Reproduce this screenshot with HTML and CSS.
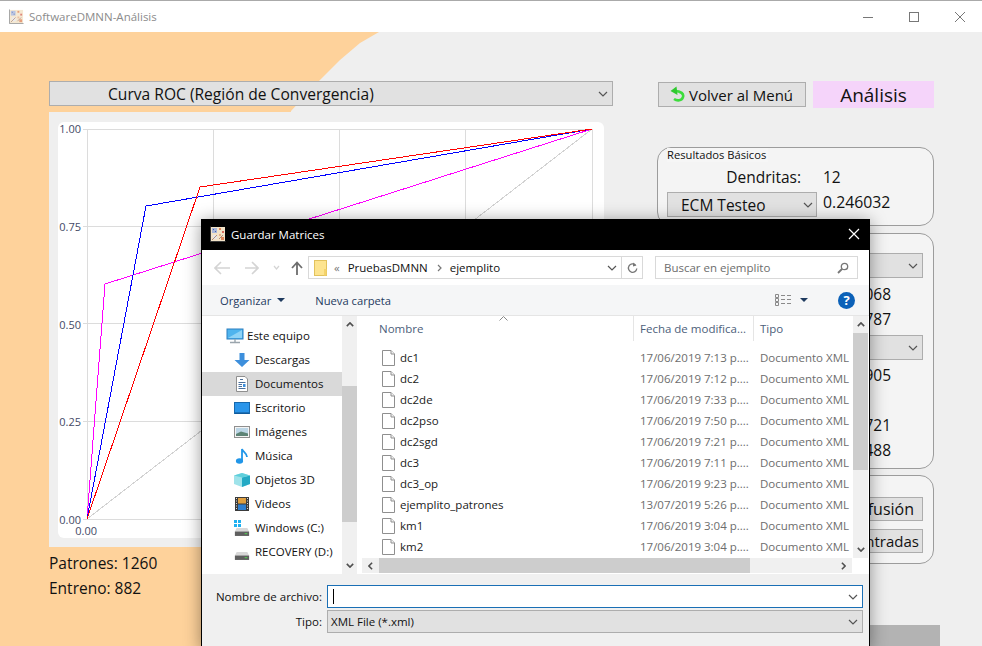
FILE: index.html
```html
<!DOCTYPE html>
<html lang="es">
<head>
    <meta charset="UTF-8">
    <meta name="viewport" content="width=device-width, initial-scale=1.0">
    <title>SoftwareDMNN-Análisis</title>
    <link rel="stylesheet" href="styles.css">
</head>
<body>

    <!-- shared icons -->
    <svg class="defs" width="0" height="0">
        <symbol id="appicon" viewBox="0 0 16 16">
            <rect x="1" y="1" width="14" height="14" fill="#f3e3c8"/>
            <rect x="2" y="2" width="5" height="5" fill="#a9b8dc"/>
            <rect x="3" y="3" width="1" height="1" fill="#4b62a8"/>
            <rect x="5" y="5" width="1" height="1" fill="#4b62a8"/>
            <rect x="9" y="2" width="2" height="2" fill="#e0875a"/>
            <rect x="12" y="5" width="2" height="2" fill="#d9695a"/>
            <rect x="9" y="8" width="2" height="2" fill="#e8b08a"/>
            <rect x="3" y="9" width="4" height="4" fill="#e6e6ea"/>
            <rect x="11" y="11" width="3" height="3" fill="#e0875a"/>
            <path d="M2 14 L7 9 M9 13 L13 9" stroke="#b08c78" stroke-width="1"/>
            <path d="M0.5 0.5 V15.5 H15.5" stroke="#555" stroke-width="1" fill="none" opacity=".7"/>
        </symbol>
        <symbol id="chev" viewBox="0 0 10 6">
            <path d="M1 1 L5 5 L9 1" fill="none" stroke="#555" stroke-width="1.2"/>
        </symbol>
        <symbol id="file" viewBox="0 0 13 16">
            <path d="M.5 .5 H9 L12.5 4 V15.5 H.5 Z" fill="#fff" stroke="#8f8f8f"/>
            <path d="M9 .5 V4 H12.5" fill="#f2f2f2" stroke="#8f8f8f"/>
        </symbol>
        <symbol id="drive" viewBox="0 0 18 10">
            <path d="M3 1 H15 L17 5 H1 Z" fill="#d8d8d8"/>
            <rect x="1" y="5" width="16" height="5" fill="#5f5f5f"/>
            <rect x="12" y="7" width="3" height="1" fill="#4fe04f"/>
        </symbol>
        <symbol id="arrow-up" viewBox="0 0 10 6">
            <path d="M1 5 L5 1 L9 5" fill="none" stroke="#505050" stroke-width="2"/>
        </symbol>
        <symbol id="arrow-down" viewBox="0 0 10 6">
            <path d="M1 1 L5 5 L9 1" fill="none" stroke="#505050" stroke-width="2"/>
        </symbol>
        <symbol id="arrow-left" viewBox="0 0 6 10">
            <path d="M5 1 L1 5 L5 9" fill="none" stroke="#505050" stroke-width="2"/>
        </symbol>
        <symbol id="arrow-right" viewBox="0 0 6 10">
            <path d="M1 1 L5 5 L1 9" fill="none" stroke="#505050" stroke-width="2"/>
        </symbol>
    </svg>

    <div class="window">
        <div class="titlebar">
            <svg class="title-icon" width="15" height="15"><use href="#appicon"/></svg>
            <span class="title-text">SoftwareDMNN-Análisis</span>
            <div class="win-controls">
                <svg width="12" height="12" viewBox="0 0 12 12"><path d="M1 6.5 H11" stroke="#777"/></svg>
                <svg width="12" height="12" viewBox="0 0 12 12"><rect x="1.5" y="1.5" width="9" height="9" fill="none" stroke="#777"/></svg>
                <svg width="12" height="12" viewBox="0 0 12 12"><path d="M1 1 L11 11 M11 1 L1 11" stroke="#777"/></svg>
            </div>
        </div>

        <div class="app">
            <div class="peach"></div>

            <div class="left-col">
                <div class="combo combo-main">
                    <span>Curva ROC (Región de Convergencia)</span>
                    <svg class="chev" width="10" height="6"><use href="#chev"/></svg>
                </div>
                <div class="chart-panel">
                    <div class="chart-card">
                        <svg class="chart" width="546" height="416" viewBox="58 122 546 416">
                            <g class="grid">
                                <path d="M83 129.5 H592 M83 226.5 H592 M83 323.5 H592 M83 421.5 H592 M83 519.5 H592"/>
                                <path d="M87.5 129 V519 M213.5 129 V519 M339.5 129 V519 M465.5 129 V519 M592.5 129 V519"/>
                            </g>
                            <g class="curves">
                                <polyline points="87,519 592,129" stroke="#d2d2d2"/>
                                <polyline points="87,519 105,284 592,129" stroke="#ff00ff"/>
                                <polyline points="87,519 146,206 592,129" stroke="#0000ff"/>
                                <polyline points="87,519 200,187 592,129" stroke="#ff0000"/>
                            </g>
                            <g class="ticks">
                                <text x="81" y="133">1.00</text>
                                <text x="81" y="231">0.75</text>
                                <text x="81" y="329">0.50</text>
                                <text x="81" y="426">0.25</text>
                                <text x="81" y="524">0.00</text>
                                <text x="97" y="535">0.00</text>
                            </g>
                        </svg>
                    </div>
                </div>
                <div class="stats">
                    <p>Patrones: 1260</p>
                    <p>Entreno: 882</p>
                </div>
            </div>

            <div class="right-col">
                <div class="top-row">
                    <div class="btn btn-back">
                        <svg width="15" height="17" viewBox="0 0 15 17">
                            <path d="M5 5 C11 5 14 8 13 11 C12 15 7 15 4 13" fill="none" stroke="#3cdc3c" stroke-width="2.6"/>
                            <path d="M6.5 0.5 L0.5 5 L7.5 9 Z" fill="#2fc92f"/>
                        </svg>
                        <span>Volver al Menú</span>
                    </div>
                    <div class="section-name">Análisis</div>
                </div>

                <div class="group group-basic">
                    <span class="group-title">Resultados Básicos</span>
                    <div class="basic-row">
                        <span class="basic-label">Dendritas:</span>
                        <span>12</span>
                    </div>
                    <div class="basic-row basic-row-combo">
                        <div class="combo combo-ecm">
                            <span>ECM Testeo</span>
                            <svg class="chev" width="10" height="6"><use href="#chev"/></svg>
                        </div>
                        <span class="basic-value">0.246032</span>
                    </div>
                </div>

                <!-- the dialog covers the left part of this box, only the tails show -->
                <div class="group group-metrics">
                    <div class="combo combo-wide"><svg class="chev" width="10" height="6"><use href="#chev"/></svg></div>
                    <div class="value-row">068</div>
                    <div class="value-row">787</div>
                    <div class="combo combo-wide combo-second"><svg class="chev" width="10" height="6"><use href="#chev"/></svg></div>
                    <div class="value-row">905</div>
                    <div class="value-row"></div>
                    <div class="value-row">721</div>
                    <div class="value-row">488</div>
                </div>

                <div class="group group-actions">
                    <div class="btn btn-action">fusión</div>
                    <div class="btn btn-action btn-tight">ntradas</div>
                </div>

                <div class="progress"></div>
            </div>
        </div>
    </div>

    <!-- Guardar Matrices dialog -->
    <div class="dialog">
        <div class="dialog-title">
            <svg width="16" height="16"><use href="#appicon"/></svg>
            <span>Guardar Matrices</span>
            <svg class="dialog-close" width="12" height="12" viewBox="0 0 12 12"><path d="M1 1 L11 11 M11 1 L1 11" stroke="#fff" stroke-width="1.2"/></svg>
        </div>

        <div class="nav-bar">
            <svg class="nav-back" width="16" height="14" viewBox="0 0 16 14"><path d="M7 1 L1 7 L7 13 M1 7 H16" fill="none" stroke="#d4d4d4" stroke-width="1.6"/></svg>
            <svg class="nav-fwd" width="14" height="14" viewBox="0 0 14 14"><path d="M7 1 L13 7 L7 13 M13 7 H0" fill="none" stroke="#d4d4d4" stroke-width="1.6"/></svg>
            <svg class="nav-drop" width="7" height="5" viewBox="0 0 7 5"><path d="M1 1 L3.5 4 L6 1" fill="none" stroke="#d4d4d4" stroke-width="1.2"/></svg>
            <svg class="nav-up" width="12" height="14" viewBox="0 0 12 14"><path d="M1 7 L6 1.5 L11 7 M6 2 V14" fill="none" stroke="#6d6d6d" stroke-width="1.8"/></svg>
            <div class="address">
                <svg class="folder" width="13" height="16" viewBox="0 0 13 16">
                    <rect x=".5" y=".5" width="12" height="15" fill="#fde48f" stroke="#e2c25c"/>
                    <rect x="10" y="9" width="2.5" height="6.5" fill="#f4d36b"/>
                </svg>
                <span class="crumb-sep">«</span>
                <span class="crumb">PruebasDMNN</span>
                <svg class="crumb-arrow" width="5" height="8" viewBox="0 0 5 8"><path d="M1 1 L4 4 L1 7" fill="none" stroke="#777" stroke-width="1.2"/></svg>
                <span class="crumb">ejemplito</span>
                <svg class="address-chev" width="10" height="6"><use href="#chev"/></svg>
                <div class="address-refresh">
                    <svg width="11" height="12" viewBox="0 0 11 12"><path d="M8.5 3 A4.2 4.2 0 1 0 9.8 6.5" fill="none" stroke="#777" stroke-width="1.3"/><path d="M6 .5 L9.5 3.5 L6 4.5 Z" fill="#777"/></svg>
                </div>
            </div>
            <div class="search">
                <span>Buscar en ejemplito</span>
                <svg width="12" height="12" viewBox="0 0 12 12"><circle cx="7.5" cy="4.5" r="3.2" fill="none" stroke="#777" stroke-width="1.3"/><path d="M5 7 L1 11" stroke="#777" stroke-width="1.8"/></svg>
            </div>
        </div>

        <div class="toolbar">
            <span class="tool-item">Organizar</span>
            <i class="caret"></i>
            <span class="tool-item tool-new">Nueva carpeta</span>
            <svg class="view-icon" width="17" height="12" viewBox="0 0 17 12">
                <path d="M.5 .5 H3.5 V3.5 H.5 Z M.5 4.5 H3.5 V7.5 H.5 Z M.5 8.5 H3.5 V11.5 H.5 Z" fill="none" stroke="#8a8a8a"/>
                <path d="M6 1.5 H10 M12 1.5 H16 M6 5.5 H10 M12 5.5 H16 M6 9.5 H10 M12 9.5 H16" stroke="#8a8a8a"/>
            </svg>
            <i class="caret caret-view"></i>
            <span class="help">?</span>
        </div>

        <div class="dialog-main">
            <div class="tree">
                <div class="tree-row tree-root">
                    <svg width="18" height="16" viewBox="0 0 18 16">
                        <rect x="1" y="1" width="16" height="10" fill="#4fb4ee" stroke="#2a7fc0"/>
                        <path d="M2 10 L16 2 V10 Z" fill="#8ed3f7"/>
                        <path d="M9 11 V14 M4 14.5 H14" stroke="#9aa5ad" stroke-width="1.4"/>
                    </svg>
                    <span>Este equipo</span>
                </div>
                <div class="tree-row">
                    <svg width="16" height="16" viewBox="0 0 16 16"><path d="M5.5 1 H10.5 V8 H15.5 L8 15 L.5 8 H5.5 Z" fill="#3d8fdc"/></svg>
                    <span>Descargas</span>
                </div>
                <div class="tree-row tree-selected">
                    <svg width="16" height="16" viewBox="0 0 16 16">
                        <path d="M2.5 .5 H11 L13.5 3 V15.5 H2.5 Z" fill="#fff" stroke="#8f8f8f"/>
                        <path d="M6 3.5 H9 M4.5 6.5 H11.5 M4.5 8.5 H8 M4.5 10.5 H8 M4.5 12.5 H11.5" stroke="#4a6f9c"/>
                        <rect x="9" y="8" width="2.5" height="3" fill="#3d8fdc"/>
                    </svg>
                    <span>Documentos</span>
                </div>
                <div class="tree-row">
                    <svg width="16" height="16" viewBox="0 0 16 16"><rect x=".5" y="2.5" width="15" height="11" fill="#2a95ea" stroke="#1668ad"/><path d="M1 13 H15" stroke="#0d4f8a"/></svg>
                    <span>Escritorio</span>
                </div>
                <div class="tree-row">
                    <svg width="16" height="16" viewBox="0 0 16 16">
                        <rect x=".5" y="2.5" width="15" height="11" fill="#f4f4f4" stroke="#8f8f8f"/>
                        <rect x="2" y="4" width="12" height="8" fill="#bcd6e6"/>
                        <path d="M2 10 L7 7.5 L14 9.5 V12 H2 Z" fill="#5d8476"/>
                    </svg>
                    <span>Imágenes</span>
                </div>
                <div class="tree-row">
                    <svg width="16" height="16" viewBox="0 0 16 16"><ellipse cx="5.5" cy="13" rx="3.6" ry="2.8" fill="#2196e8"/><path d="M8 13 V1 C9 4 13 5 13 9" fill="none" stroke="#2196e8" stroke-width="1.8"/></svg>
                    <span>Música</span>
                </div>
                <div class="tree-row">
                    <svg width="16" height="16" viewBox="0 0 16 16">
                        <path d="M0 3.5 L8 1 L16 3.5 V12 L8 15 L0 12 Z" fill="#9fe3ea"/>
                        <path d="M8 5.5 L16 3.5 V12 L8 15 Z" fill="#23a9c4"/>
                        <path d="M0 3.5 L8 1 L16 3.5 L8 5.5 Z" fill="#5fcfdb"/>
                    </svg>
                    <span>Objetos 3D</span>
                </div>
                <div class="tree-row">
                    <svg width="16" height="16" viewBox="0 0 16 16">
                        <rect x="1" y="1" width="14" height="14" fill="#3b3b3b"/>
                        <rect x="4" y="2" width="8" height="5.5" fill="#e0a040"/>
                        <rect x="4" y="8.5" width="8" height="5.5" fill="#2f7fd0"/>
                        <path d="M2.5 2 V14 M13.5 2 V14" stroke="#ddd" stroke-dasharray="1 1.5"/>
                    </svg>
                    <span>Videos</span>
                </div>
                <div class="tree-row">
                    <svg width="16" height="16" viewBox="0 0 16 16">
                        <rect x="0" y="0" width="3" height="3" fill="#20b0f0"/>
                        <rect x="4" y="0" width="3" height="3" fill="#20b0f0"/>
                        <rect x="0" y="4" width="3" height="3" fill="#20b0f0"/>
                        <rect x="4" y="4" width="3" height="3" fill="#20b0f0"/>
                        <use href="#drive" x="0" y="7" width="16" height="9"/>
                    </svg>
                    <span>Windows (C:)</span>
                </div>
                <div class="tree-row">
                    <svg width="16" height="16" viewBox="0 0 16 16"><use href="#drive" x="0" y="7" width="16" height="9"/></svg>
                    <span>RECOVERY (D:)</span>
                </div>
            </div>
            <div class="vscroll">
                <div class="sb-arrow"><svg width="10" height="6"><use href="#arrow-up"/></svg></div>
                <div class="sb-thumb tree-thumb"></div>
                <div class="sb-arrow sb-end"><svg width="10" height="6"><use href="#arrow-down"/></svg></div>
            </div>

            <div class="pane">
                <div class="pane-top">
                    <div class="files">
                        <div class="file-head">
                            <span class="head-name">Nombre</span>
                            <span class="head-cell">Fecha de modifica...</span>
                            <span class="head-cell">Tipo</span>
                            <svg class="sort" width="9" height="5" viewBox="0 0 9 5"><path d="M.5 4.5 L4.5 .5 L8.5 4.5" fill="none" stroke="#888"/></svg>
                        </div>
                        <div class="file-rows">
                            <div class="file-row"><span class="file-name"><svg width="13" height="16"><use href="#file"/></svg>dc1</span><span>17/06/2019 7:13 p....</span><span>Documento XML</span></div>
                            <div class="file-row"><span class="file-name"><svg width="13" height="16"><use href="#file"/></svg>dc2</span><span>17/06/2019 7:12 p....</span><span>Documento XML</span></div>
                            <div class="file-row"><span class="file-name"><svg width="13" height="16"><use href="#file"/></svg>dc2de</span><span>17/06/2019 7:33 p....</span><span>Documento XML</span></div>
                            <div class="file-row"><span class="file-name"><svg width="13" height="16"><use href="#file"/></svg>dc2pso</span><span>17/06/2019 7:50 p....</span><span>Documento XML</span></div>
                            <div class="file-row"><span class="file-name"><svg width="13" height="16"><use href="#file"/></svg>dc2sgd</span><span>17/06/2019 7:21 p....</span><span>Documento XML</span></div>
                            <div class="file-row"><span class="file-name"><svg width="13" height="16"><use href="#file"/></svg>dc3</span><span>17/06/2019 7:11 p....</span><span>Documento XML</span></div>
                            <div class="file-row"><span class="file-name"><svg width="13" height="16"><use href="#file"/></svg>dc3_op</span><span>17/06/2019 9:23 p....</span><span>Documento XML</span></div>
                            <div class="file-row"><span class="file-name"><svg width="13" height="16"><use href="#file"/></svg>ejemplito_patrones</span><span>13/07/2019 5:26 p....</span><span>Documento XML</span></div>
                            <div class="file-row"><span class="file-name"><svg width="13" height="16"><use href="#file"/></svg>km1</span><span>17/06/2019 3:04 p....</span><span>Documento XML</span></div>
                            <div class="file-row"><span class="file-name"><svg width="13" height="16"><use href="#file"/></svg>km2</span><span>17/06/2019 3:04 p....</span><span>Documento XML</span></div>
                        </div>
                    </div>
                    <div class="vscroll vscroll-files">
                        <div class="sb-arrow"><svg width="10" height="6"><use href="#arrow-up"/></svg></div>
                        <div class="sb-thumb files-thumb"></div>
                        <div class="sb-arrow sb-end"><svg width="10" height="6"><use href="#arrow-down"/></svg></div>
                    </div>
                </div>
                <div class="hscroll">
                    <div class="sb-arrow-h"><svg width="6" height="10"><use href="#arrow-left"/></svg></div>
                    <div class="sb-thumb-h"></div>
                    <div class="sb-arrow-h sb-end-h"><svg width="6" height="10"><use href="#arrow-right"/></svg></div>
                </div>
            </div>
        </div>

        <div class="dialog-foot">
            <div class="foot-row">
                <label class="foot-label">Nombre de archivo:</label>
                <div class="foot-input">
                    <i class="text-caret"></i>
                    <svg class="chev" width="10" height="6"><use href="#chev"/></svg>
                </div>
            </div>
            <div class="foot-row">
                <label class="foot-label">Tipo:</label>
                <div class="foot-select">
                    <span>XML File (*.xml)</span>
                    <svg class="chev" width="10" height="6"><use href="#chev"/></svg>
                </div>
            </div>
        </div>
    </div>

</body>
</html>
```

FILE: styles.css
```css
body {
    margin: 0;
    padding: 0;
    height: 646px;
    overflow: hidden;
    position: relative;
    font-family: "Open Sans", "Noto Sans", sans-serif;
    color: #111;
    background-color: #efefef;
}
p {
    margin: 0;
}
svg {
    display: block;
    flex: none;
}
.defs {
    position: absolute;
}
.window {
    display: flex;
    flex-direction: column;
    height: 646px;
}
.titlebar {
    display: flex;
    align-items: center;
    height: 31px;
    padding-left: 9px;
    background-color: #ffffff;
    border-top: 1px solid #aaaaaa;
    flex: none;
}
.title-icon {
    opacity: 0.8;
}
.title-text {
    margin-left: 5px;
    font-size: 11.5px;
    color: #8c8c8c;
}
.win-controls {
    display: flex;
    gap: 34px;
    margin-left: auto;
    margin-right: 16px;
}

/* Main window */
.app {
    position: relative;
    flex: 1;
    display: flex;
    gap: 44px;
    padding: 49px 0 0 49px;
}
.peach {
    position: absolute;
    top: 0;
    left: 0;
    width: 400px;
    height: 614px;
    background-color: #fed29b;
    clip-path: polygon(0 0, 379px 0, 360px 11px, 340px 28px, 319px 49px, 291px 79px, 225px 614px, 0 614px);
}
.left-col {
    position: relative;
    width: 564px;
}
.right-col {
    position: relative;
    width: 283px;
}
.combo {
    display: flex;
    align-items: center;
    box-sizing: border-box;
    height: 25px;
    background-color: #e1e1e1;
    border: 1px solid #adadad;
    font-size: 15.5px;
}
.combo .chev {
    margin-left: auto;
}
.combo-main {
    padding: 0 4px 0 58px;
    font-size: 15.6px;
}
.chart-panel {
    margin-top: 6px;
    width: 555px;
    height: 435px;
    padding: 10px 0 0 9px;
    box-sizing: border-box;
    background-color: #efefef;
}
.chart-card {
    width: 546px;
    height: 416px;
    background-color: #ffffff;
    border-radius: 6px;
}
.chart .grid path {
    stroke: #dcdcdc;
    fill: none;
}
.chart .curves polyline {
    fill: none;
    stroke-width: 1;
    shape-rendering: crispEdges;
}
.chart .ticks text {
    font-size: 11px;
    fill: #444a66;
    text-anchor: end;
}
.stats {
    margin-top: 4px;
    font-size: 15.5px;
    line-height: 25px;
}

/* Right column */
.top-row {
    display: flex;
    align-items: center;
    gap: 7px;
    height: 27px;
    margin-left: 1px;
    margin-bottom: 39px;
}
.btn {
    box-sizing: border-box;
    background-color: #e1e1e1;
    border: 1px solid #adadad;
    font-size: 15.5px;
}
.btn-back {
    display: flex;
    align-items: center;
    gap: 4px;
    width: 148px;
    height: 25px;
    padding-left: 11px;
    font-size: 15px;
}
.section-name {
    width: 121px;
    height: 27px;
    padding-top: 1px;
    box-sizing: border-box;
    line-height: 27px;
    text-align: center;
    font-size: 19px;
    background-color: #f5d4fa;
}
.group {
    position: relative;
    box-sizing: border-box;
    width: 277px;
    background-color: #f4f4f4;
    border: 1px solid #9c9c9c;
    border-radius: 14px;
}
.group-title {
    position: absolute;
    top: 0;
    left: 9px;
    padding: 0 2px 0 0;
    line-height: 14px;
    font-size: 11.2px;
    background-color: #f6f6f6;
}
.group-basic {
    height: 79px;
    padding: 19px 0 0 9px;
    font-size: 15.5px;
}
.basic-row {
    display: flex;
    height: 20px;
    line-height: 20px;
}
.basic-label {
    width: 134px;
    margin-right: 22px;
    text-align: right;
}
.basic-row-combo {
    height: 25px;
    margin-top: 5px;
}
.combo-ecm {
    width: 150px;
    margin-right: 6px;
    padding: 0 3px 0 13px;
}
.basic-value {
    font-size: 15.8px;
}
.group-metrics {
    height: 236px;
    margin-top: 7px;
    padding: 19px 10px 0 9px;
}
.combo-wide {
    width: 256px;
    padding-right: 4px;
}
.combo-second {
    margin-top: 3px;
}
.value-row {
    height: 25px;
    line-height: 25px;
    padding-right: 32px;
    text-align: right;
    font-size: 15.5px;
}
.combo-second + .value-row {
    margin-top: 3px;
}
.group-metrics > .combo:first-child + .value-row {
    margin-top: 4px;
}
.group-actions {
    display: flex;
    flex-direction: column;
    align-items: flex-end;
    gap: 8px;
    height: 89px;
    margin-top: 6px;
    padding: 21px 10px 0 9px;
}
.btn-action {
    width: 170px;
    height: 24px;
    line-height: 23px;
    padding-right: 8px;
    text-align: right;
    font-size: 16px;
}
.btn-tight {
    padding-right: 3px;
    font-size: 15px;
}
.progress {
    width: 283px;
    height: 21px;
    margin-top: 61px;
    background-color: #b3b3b3;
}

/* Guardar Matrices dialog */
.dialog {
    position: absolute;
    top: 219px;
    left: 201px;
    width: 669px;
    height: 430px;
    box-sizing: border-box;
    display: flex;
    flex-direction: column;
    background-color: #ffffff;
    border: 1px solid #000000;
    border-bottom: 0;
    box-shadow: 0 2px 16px rgba(0, 0, 0, 0.4);
    font-size: 11.5px;
}
.dialog-title {
    display: flex;
    align-items: center;
    gap: 5px;
    box-sizing: border-box;
    height: 30px;
    padding: 0 0 2px 8px;
    background-color: #000000;
    color: #ffffff;
    flex: none;
}
.dialog-close {
    margin-left: auto;
    margin-right: 9px;
}
.nav-bar {
    display: flex;
    align-items: center;
    height: 35px;
    padding-left: 12px;
    flex: none;
}
.nav-fwd {
    margin-left: 15px;
}
.nav-drop {
    margin-left: 14px;
}
.nav-up {
    margin-left: 11px;
}
.address {
    display: flex;
    align-items: center;
    box-sizing: border-box;
    width: 335px;
    height: 23px;
    margin-left: 5px;
    padding-left: 5px;
    border: 1px solid #d9d9d9;
}
.crumb-sep {
    margin: 0 8px 0 7px;
    color: #777777;
}
.crumb-arrow {
    margin: 0 8px 0 9px;
}
.address-chev {
    margin-left: auto;
    margin-right: 4px;
}
.address-refresh {
    display: flex;
    align-items: center;
    justify-content: center;
    width: 20px;
    height: 100%;
    border-left: 1px solid #d9d9d9;
}
.search {
    display: flex;
    align-items: center;
    justify-content: space-between;
    box-sizing: border-box;
    width: 203px;
    height: 23px;
    margin-left: 12px;
    padding: 0 8px;
    border: 1px solid #d9d9d9;
    color: #6d6d6d;
}
.toolbar {
    display: flex;
    align-items: center;
    height: 30px;
    padding-left: 18px;
    background-color: #f5f6f7;
    border-bottom: 1px solid #e5e5e5;
    color: #1e3a5f;
    font-size: 11.2px;
    flex: none;
}
.caret {
    width: 0;
    height: 0;
    margin-left: 6px;
    border-left: 4px solid transparent;
    border-right: 4px solid transparent;
    border-top: 4px solid #1e3a5f;
}
.tool-new {
    margin-left: 30px;
}
.view-icon {
    margin-left: 384px;
}
.caret-view {
    margin-left: 8px;
}
.help {
    width: 17px;
    height: 17px;
    margin-left: 30px;
    line-height: 17px;
    border-radius: 50%;
    text-align: center;
    font-size: 13px;
    font-weight: bold;
    color: #ffffff;
    background-color: #0b61b8;
}
.dialog-main {
    display: flex;
    height: 258px;
    flex: none;
}
.tree {
    width: 140px;
    padding-top: 8px;
    overflow: hidden;
}
.tree-row {
    display: flex;
    align-items: center;
    gap: 5px;
    height: 24px;
    padding-left: 32px;
    white-space: nowrap;
}
.tree-row span {
    margin-bottom: 2px;
}
.tree-root {
    gap: 3px;
    padding-left: 24px;
}
.tree-selected {
    background-color: #d9d9d9;
}
.vscroll {
    display: flex;
    flex-direction: column;
    width: 15px;
    background-color: #f0f0f0;
    flex: none;
}
.sb-arrow {
    display: flex;
    align-items: center;
    justify-content: center;
    height: 17px;
    flex: none;
}
.sb-arrow svg {
    width: 8px;
    height: 5px;
}
.sb-end {
    margin-top: auto;
}
.sb-thumb {
    background-color: #cdcdcd;
}
.tree-thumb {
    height: 136px;
    margin-top: 53px;
}
.files-thumb {
    height: 137px;
}
.pane {
    display: flex;
    flex-direction: column;
    width: 506px;
    margin-left: 5px;
}
.pane-top {
    display: flex;
    height: 242px;
}
.files {
    width: 491px;
    overflow: hidden;
}
.file-head {
    position: relative;
    display: grid;
    grid-template-columns: 271px 120px 1fr;
    height: 25px;
    line-height: 25px;
    color: #4c607a;
}
.head-name {
    padding-left: 17px;
}
.head-cell {
    padding-left: 6px;
    border-left: 1px solid #e5e5e5;
}
.sort {
    position: absolute;
    top: 0;
    left: 137px;
}
.file-rows {
    padding-top: 7px;
}
.file-row {
    display: grid;
    grid-template-columns: 278px 120px 1fr;
    align-items: center;
    height: 21px;
    color: #6d6d6d;
    white-space: nowrap;
}
.file-row > span {
    margin-bottom: 2px;
}
.file-name {
    display: flex;
    align-items: center;
    gap: 5px;
    padding-left: 20px;
    color: #1a1a1a;
}
.hscroll {
    display: flex;
    width: 490px;
    height: 15px;
    background-color: #f0f0f0;
    flex: none;
}
.sb-arrow-h {
    display: flex;
    align-items: center;
    justify-content: center;
    width: 17px;
    flex: none;
}
.sb-arrow-h svg {
    width: 5px;
    height: 8px;
}
.sb-end-h {
    margin-left: auto;
}
.sb-thumb-h {
    width: 371px;
    background-color: #cdcdcd;
}
.dialog-foot {
    flex: 1;
    padding-top: 11px;
    background-color: #f0f0f0;
}
.foot-row {
    display: flex;
    align-items: center;
    margin-bottom: 2px;
}
.foot-label {
    width: 120px;
    margin-right: 5px;
    text-align: right;
}
.foot-input,
.foot-select {
    display: flex;
    align-items: center;
    box-sizing: border-box;
    width: 536px;
    height: 23px;
    padding: 0 4px 0 5px;
}
.foot-input {
    background-color: #ffffff;
    border: 1px solid #1a6fb5;
}
.foot-select {
    background-color: #e1e1e1;
    border: 1px solid #adadad;
    padding-left: 3px;
}
.foot-input .chev,
.foot-select .chev {
    margin-left: auto;
}
.text-caret {
    width: 1px;
    height: 15px;
    background-color: #000000;
}
```
